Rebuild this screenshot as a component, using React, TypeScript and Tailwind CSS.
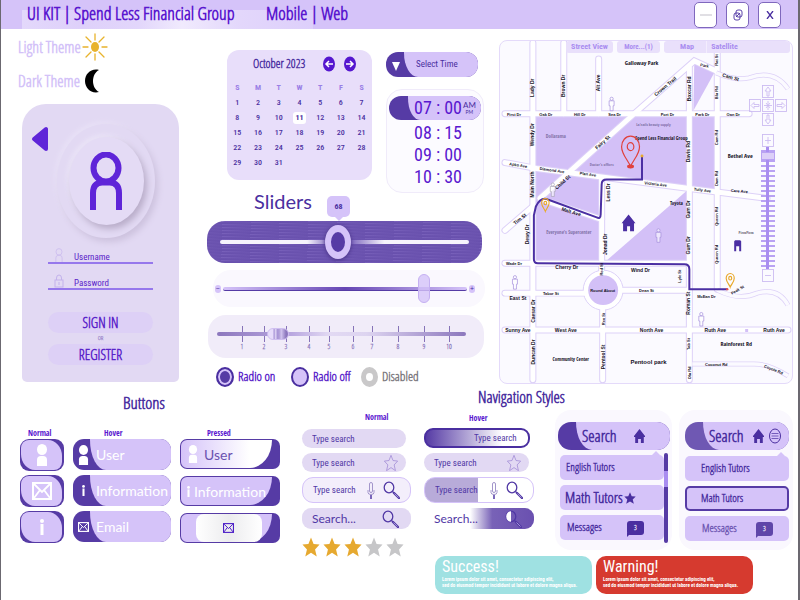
import type { ReactNode } from "react";

const NARROW = "font-['Open_Sans_Condensed_Light','Roboto_Condensed',sans-serif]";
const HEAVY = "font-['Open_Sans_Condensed','Roboto_Condensed',sans-serif]";
const MEDIUM = "font-['Roboto_Condensed','Open_Sans',sans-serif]";
const HUMAN = "font-['Lato','Open_Sans',sans-serif]";

/* ---------- icons ---------- */

function SunIcon() {
  return (
    <svg viewBox="0 0 26 28" className="h-7 w-[26px]" aria-hidden="true">
      <ellipse cx="13" cy="14" rx="4" ry="5" fill="#e8b32c" />
      <g stroke="#e8b32c" strokeWidth="1.3" strokeLinecap="round">
        <path d="M13 1v6M13 21v6M1 14h5M20 14h5M4 4l5 5M17 19l5 5M22 4l-5 5M9 19l-5 5" />
      </g>
    </svg>
  );
}

function MoonIcon() {
  return (
    <svg viewBox="0 0 16 24" className="h-6 w-4" aria-hidden="true">
      <path d="M15 1C7-1 1 5 1 12s6 13 14 11C7 19 7 5 15 1Z" fill="#000" />
    </svg>
  );
}

function PersonOutline({ className, width }: { className: string; width: number }) {
  return (
    <svg viewBox="0 0 34 58" className={className} fill="none" stroke="currentColor" strokeWidth={width} aria-hidden="true">
      <ellipse cx="17" cy="16" rx="12.5" ry="13.5" />
      <path d="M4 58V41q0-10 9-10.500h8q9 .5 9 10.500v17" />
    </svg>
  );
}

function LockIcon() {
  return (
    <svg viewBox="0 0 10 14" className="h-3.5 w-2.5" fill="none" stroke="#c3b2ec" strokeWidth="1" aria-hidden="true">
      <rect x="1" y="6" width="8" height="7" />
      <path d="M2.500 6V4a2.500 3 0 0 1 5 0v2M5 8v3" />
    </svg>
  );
}

function PersonSolid({ className }: { className: string }) {
  return (
    <svg viewBox="0 0 12 22" className={className} fill="#fff" aria-hidden="true">
      <ellipse cx="6" cy="5.500" rx="5" ry="5.500" />
      <path d="M1 22v-6q0-4 4-4h2q4 0 4 4v6Z" />
    </svg>
  );
}

function MailIcon({ className }: { className: string }) {
  return (
    <svg viewBox="0 0 20 18" className={className} fill="none" stroke="currentColor" strokeWidth="2" aria-hidden="true">
      <rect x="1" y="1" width="18" height="16" />
      <path d="M2 2l8 8 8-8M2 16l6-8M18 16l-6-8" strokeWidth="1.800" />
    </svg>
  );
}

function InfoIcon({ className }: { className: string }) {
  return (
    <svg viewBox="0 0 4 16" className={className} fill="#fff" aria-hidden="true">
      <circle cx="2" cy="2" r="2" />
      <path d="M.5 5h3v11h-3Z" />
    </svg>
  );
}

function SearchIcon({ filled = false }: { filled?: boolean }) {
  return (
    <svg viewBox="0 0 17 18" className="h-[18px] w-[17px] shrink-0" fill="none" stroke="#5138a5" aria-hidden="true">
      <ellipse cx="6" cy="6.500" rx="4.800" ry="5.300" strokeWidth="1.300" />
      {filled && <path d="M6 1.200a4.800 5.300 0 0 0 0 10.600Z" fill="#fff" stroke="none" />}
      <path d="M9.500 10.500l1.500 1.500" strokeWidth="1.300" />
      <path d="M11 12l5 5" strokeWidth="2.400" strokeLinecap="round" />
      <path d="M11.500 12.500l4 4" stroke="#c9bcea" strokeWidth=".7" />
    </svg>
  );
}

function MicIcon() {
  return (
    <svg viewBox="0 0 8 17" className="h-[17px] w-2 shrink-0" fill="none" stroke="#a396cb" strokeWidth="1" aria-hidden="true">
      <rect x="2.500" y=".5" width="3" height="10" rx="1.500" />
      <path d="M1 8v2.500q0 2 3 2t3-2V8" />
      <path d="M4 13v4" stroke="#5138a5" strokeWidth="1.500" />
    </svg>
  );
}

const STAR = "M8 .3l2.300 4.900 5.300.5-4 3.600 1.500 5.400L8 11.800l-5.100 2.900 1.500-5.400-4-3.600 5.300-.5Z";

function Star({ className, outline = false }: { className: string; outline?: boolean }) {
  return (
    <svg viewBox="0 0 16 15" preserveAspectRatio="none" className={className} aria-hidden="true">
      <path d={STAR} fill={outline ? "none" : "currentColor"} stroke={outline ? "currentColor" : "none"} strokeWidth=".8" />
    </svg>
  );
}

function HomeIcon() {
  return (
    <svg viewBox="0 0 11 14" className="h-3.5 w-[11px] shrink-0" fill="#4a2fa0" aria-hidden="true">
      <path d="M5.500 0L0 7v1h1.200v6h2.900v-4h2.800v4h2.900V8H11V7Z" />
    </svg>
  );
}

function ChatBadge({ className, tail }: { className: string; tail: string }) {
  return (
    <span className={`relative flex h-3.5 w-[17px] items-center justify-center rounded-[3px] text-[7px] leading-none font-bold text-white ${className}`}>
      3
      <svg viewBox="0 0 4 4" className="absolute -bottom-[2px] left-0 size-1" aria-hidden="true">
        <path d="M0 0h4L0 4Z" fill={tail} />
      </svg>
    </span>
  );
}

/* ---------- header ---------- */

function WindowButton({ label, children }: { label: string; children: ReactNode }) {
  return (
    <button aria-label={label} className="flex h-[26px] w-[23px] items-center justify-center rounded-[5px] border border-[#7f68bd] bg-white text-[#4a2fa0]">
      {children}
    </button>
  );
}

function Header() {
  return (
    <header className="flex h-[29px] items-center justify-between bg-[#d5c3f9] bg-[linear-gradient(90deg,#e3d8fb,#ded0fa_20%,#e2d6fb_40%,#f0eafd_55%,#e3d7fb_75%,#ddcffb)] bg-[length:291px_19px] bg-[position:21px_bottom] bg-no-repeat pr-[17px] pl-[26px]">
      <div className={`flex pb-1 text-[18px] leading-6 font-bold whitespace-nowrap text-[#5a17cf] ${NARROW}`}>
        <h1 className="w-[239px]">UI KIT | Spend Less Financial Group</h1>
        <p>Mobile | Web</p>
      </div>
      <div className="flex gap-[9px]">
        <WindowButton label="Minimize">
          <svg viewBox="0 0 12 2" className="h-0.5 w-3" aria-hidden="true"><path d="M0 1h12" stroke="#c2bfc9" /></svg>
        </WindowButton>
        <WindowButton label="Restore">
          <svg viewBox="0 0 10 12" className="h-3 w-2.5" fill="none" stroke="currentColor" strokeWidth=".9" aria-hidden="true">
            <rect x="3" y="1" width="6" height="7" rx="2" />
            <rect x="1" y="4" width="6" height="7" rx="2" />
            <path d="M3 8l4-4" />
          </svg>
        </WindowButton>
        <WindowButton label="Close">
          <svg viewBox="0 0 8 8" className="size-2" stroke="currentColor" strokeWidth="1.300" aria-hidden="true"><path d="M1 0l6 8M7 0L1 8" /></svg>
        </WindowButton>
      </div>
    </header>
  );
}

/* ---------- login ---------- */

function Field({ name, type, icon }: { name: string; type: string; icon: ReactNode }) {
  return (
    <label className="flex h-[17px] items-center gap-2.5 border-b-2 border-[#9678ec] pl-1.5">
      {icon}
      <input
        type={type}
        aria-label={name}
        placeholder={name}
        className={`w-full min-w-0 bg-transparent pt-1 text-[9px] leading-3 outline-none placeholder:text-[#5a24c9] placeholder:opacity-100 ${MEDIUM}`}
      />
    </label>
  );
}

function Login() {
  return (
    <section className="flex flex-col pl-[17px]">
      <div className={`flex flex-col gap-1 pt-1 text-[16px] font-bold text-[#d3c2f8] ${NARROW}`}>
        <button className="flex h-7 items-center gap-1"><span className="w-[60px] text-left whitespace-nowrap">Light Theme</span><SunIcon /></button>
        <button className="flex h-8 items-center gap-1"><span className="w-[62px] text-left whitespace-nowrap">Dark Theme</span><MoonIcon /></button>
      </div>
      <form className="mt-[7px] ml-1 flex h-[278px] flex-col rounded-t-3xl rounded-b-[5px] bg-[#e2d9f3] pt-5">
        <div className="flex items-start pl-[9px]">
          <button type="button" aria-label="Back" className="mt-0.5">
            <svg viewBox="0 0 18 26" className="h-[26px] w-[18px]" aria-hidden="true">
              <path d="M3 13L15 3v20Z" fill="#5f25d8" stroke="#5f25d8" strokeWidth="4" strokeLinejoin="round" />
            </svg>
          </button>
          <div className="ml-2 flex h-[114px] w-[98px] items-center justify-center rounded-[50%] shadow-[3px_4px_6px_#cdc2de,-2px_-2px_5px_#e9e2f7]">
            <div className="flex h-[88px] w-[75px] items-center justify-center rounded-[50%] bg-[#e4dbf5] shadow-[3px_4px_6px_#b9adc9,-2px_-2px_5px_#ece6f8]">
              <PersonOutline className="h-[58px] w-[34px] text-[#5f25d8]" width={6} />
            </div>
          </div>
        </div>
        <div className="mx-[26px] mt-[9px] flex flex-col gap-[9px]">
          <Field name="Username" type="text" icon={<PersonOutline className="h-3.5 w-2.5 shrink-0 text-[#c9b9ee]" width={3} />} />
          <Field name="Password" type="password" icon={<span className="shrink-0"><LockIcon /></span>} />
        </div>
        <div className={`mx-[26px] mt-[22px] flex flex-col text-[14px] font-bold text-[#5a24c9] ${NARROW}`}>
          <button type="submit" className="h-[21px] rounded-full bg-[#ddd0f6]">SIGN IN</button>
          <span className="h-[11px] text-center text-[6px] leading-[11px] text-[#8f7bc4]">OR</span>
          <button type="button" className="h-[21px] rounded-full bg-[#ddd0f6]">REGISTER</button>
        </div>
      </form>
    </section>
  );
}

/* ---------- calendar and time ---------- */

const WEEKS = [0, 7, 14, 21, 28].map((start) => Array.from({ length: 7 }, (_, i) => start + i + 1));

function ArrowButton({ label, flip = false }: { label: string; flip?: boolean }) {
  return (
    <button aria-label={label}>
      <svg viewBox="0 0 12 16" className="h-4 w-3" aria-hidden="true">
        <ellipse cx="6" cy="8" rx="6" ry="7.500" fill="#5517cf" />
        <path d={flip ? "M2 8h7M6 5l3 3-3 3" : "M10 8H3M6 5L3 8l3 3"} fill="none" stroke="#fff" strokeWidth="1.500" />
      </svg>
    </button>
  );
}

function Calendar() {
  return (
    <div className={`h-[130px] w-[145px] rounded-xl bg-[#e8defa] pt-1.5 ${NARROW}`}>
      <div className="flex items-center pr-4 pl-[26px]">
        <h2 className="flex-1 text-[12px] leading-4 font-bold whitespace-nowrap text-[#4a2fa0]">October 2023</h2>
        <div className="flex gap-[9px]"><ArrowButton label="Previous month" /><ArrowButton label="Next month" flip /></div>
      </div>
      <table className="mt-2 w-full table-fixed text-center text-[8px] text-[#4a2fa0]">
        <thead>
          <tr className="h-[15px] text-[#9a7fe6]">
            {["S", "M", "T", "W", "T", "F", "S"].map((d, i) => <th key={i} className={`p-0 font-bold ${MEDIUM}`}>{d}</th>)}
          </tr>
        </thead>
        <tbody className={MEDIUM}>
          {WEEKS.map((week) => (
            <tr key={week[0]} className="h-[15px]">
              {week.map((d) => (
                <td key={d} className="p-0 leading-3 font-medium">
                  {d <= 31 && <button className={d === 11 ? "h-3 w-[13px] rounded-[3px] bg-white font-bold" : "h-3"}>{d}</button>}
                </td>
              ))}
            </tr>
          ))}
        </tbody>
      </table>
    </div>
  );
}

function TimePicker() {
  return (
    <div className={`flex flex-col gap-3 pt-0.5 ${MEDIUM}`}>
      <div className="flex h-[25px] w-[92px] overflow-hidden rounded-xl bg-[#563ba5]">
        <svg viewBox="0 0 18 25" className="h-full w-[18px] shrink-0" aria-hidden="true"><path d="M6 10h8l-4 9Z" fill="#fff" /></svg>
        <select aria-label="Select Time" className="min-w-0 flex-1 appearance-none rounded-bl-[14px_24px] bg-[#d5c3f9] pl-3 text-[9px] text-[#4a2fa0] outline-none">
          <option>Select Time</option>
        </select>
      </div>
      <ul className="flex h-[104px] w-[98px] flex-col rounded-2xl border border-[#f0ebfa] bg-[#fcfbff] pt-1.5 text-[18px] leading-[22px] whitespace-nowrap text-[#5a17cf]">
        <li className="mx-0.5 mb-0.5 flex h-6 overflow-hidden rounded-xl bg-[#563ba5] pl-[19px]">
          <button className="flex flex-1 items-center gap-1 rounded-bl-[12px_22px] bg-[#d5c3f9] pl-[6px]">
            <span className="w-[45px] text-left">07 : 00</span>
            <span className={`flex flex-col text-[8px] leading-[9px] text-[#4a2fa0] ${HUMAN}`}>AM<small className="text-[5px] leading-[5px]">PM</small></span>
          </button>
        </li>
        {["08 : 15", "09 : 00", "10 : 30"].map((t) => <li key={t} className="pl-[27px]"><button>{t}</button></li>)}
      </ul>
    </div>
  );
}

/* ---------- sliders ---------- */

const RANGE = "block w-full appearance-none bg-transparent outline-none [&::-webkit-slider-thumb]:appearance-none";
const TICKS = [242, 264, 286, 309, 329, 353, 372, 398, 424, 449].map((x) => ((x - 217) / 249) * 100);

function Sliders() {
  return (
    <div className="flex flex-col">
      <div className="flex h-10 items-start pt-1.5 pl-[54px]">
        <h2 className={`text-[20px] leading-7 text-[#4a2fa0] ${HUMAN}`}>Sliders</h2>
      </div>
      <div className="relative ml-[7px] flex h-[42px] w-[275px] items-center rounded-[18px] bg-[#6d55b1] bg-[repeating-linear-gradient(2deg,#7860ba_0px,#6850ad_1px,#6d55b1_3px)] px-[13px]">
        <output className={`absolute -top-[25px] left-[120px] flex h-[21px] w-[23px] items-center justify-center rounded-[5px] bg-[#d5c3f9] text-[8px] font-bold text-[#4a2fa0] after:absolute after:top-full after:border-4 after:border-b-0 after:border-transparent after:border-t-[#d5c3f9] ${MEDIUM}`}>68</output>
        <input type="range" aria-label="Volume" min={0} max={144} defaultValue={68}
          className={`${RANGE} h-9 [&::-webkit-slider-runnable-track]:h-1 [&::-webkit-slider-runnable-track]:rounded-full [&::-webkit-slider-runnable-track]:bg-[linear-gradient(90deg,#f6f3fc_35%,#7a63bd_45%,#7a63bd_52%,#f6f3fc_66%)] [&::-webkit-slider-thumb]:-mt-[15px] [&::-webkit-slider-thumb]:h-[34px] [&::-webkit-slider-thumb]:w-[26px] [&::-webkit-slider-thumb]:rounded-[50%] [&::-webkit-slider-thumb]:border-[6px] [&::-webkit-slider-thumb]:border-y-[7px] [&::-webkit-slider-thumb]:border-[#d5c3f9] [&::-webkit-slider-thumb]:bg-[#563ba5] [&::-webkit-slider-thumb]:shadow-[0_1px_4px_#463184]`} />
      </div>
      <div className="mt-[7px] ml-[13px] flex h-[37px] w-[272px] items-center rounded-[18px] bg-[#faf8fe] pr-2.5 pl-0.5">
        <button aria-label="Decrease" className="flex h-2 w-1.5 shrink-0 items-center justify-center rounded-full bg-[#d5c3f9] text-[7px] leading-none text-[#4a2fa0]">−</button>
        <input type="range" aria-label="Brightness" defaultValue={84}
          className={`${RANGE} mx-0.5 h-8 min-w-0 flex-1 [&::-webkit-slider-runnable-track]:h-1 [&::-webkit-slider-runnable-track]:rounded-full [&::-webkit-slider-runnable-track]:border-b [&::-webkit-slider-runnable-track]:border-[#563ba5] [&::-webkit-slider-runnable-track]:bg-[linear-gradient(90deg,#d5c3f9,#6546b4_50%,#d5c3f9)] [&::-webkit-slider-thumb]:-mt-[13px] [&::-webkit-slider-thumb]:h-[29px] [&::-webkit-slider-thumb]:w-3 [&::-webkit-slider-thumb]:rounded-md [&::-webkit-slider-thumb]:border [&::-webkit-slider-thumb]:border-[#c5b0f2] [&::-webkit-slider-thumb]:bg-[#d5c3f9cc]`} />
        <button aria-label="Increase" className="flex h-2 w-1.5 shrink-0 items-center justify-center rounded-full bg-[#d5c3f9] text-[7px] leading-none text-[#4a2fa0]">+</button>
      </div>
      <div className="mt-2 ml-2 h-[43px] w-[276px] rounded-[18px] bg-[#f1ecf9] pt-[11px] pr-[18px] pl-[9px]">
        <div className="relative">
          {TICKS.map((left, i) => (
            <span key={left} style={{ left: `${left}%` }} className={`absolute flex w-4 -translate-x-1/2 flex-col items-center text-[7px] leading-[9px] font-bold text-[#8673b8] ${NARROW}`}>
              <i className="h-4 w-px bg-[#8673b8]" />{i + 1}
            </span>
          ))}
          <input type="range" aria-label="Scale" defaultValue={22}
            className={`${RANGE} relative h-4 [&::-webkit-slider-runnable-track]:h-1 [&::-webkit-slider-runnable-track]:rounded-full [&::-webkit-slider-runnable-track]:bg-[linear-gradient(90deg,#8c77bd,#b9a7e0_30%,#e2d9f3_45%,#ddd4f0_60%,#8c77bd)] [&::-webkit-slider-thumb]:-mt-1 [&::-webkit-slider-thumb]:h-3 [&::-webkit-slider-thumb]:w-[22px] [&::-webkit-slider-thumb]:rounded-md [&::-webkit-slider-thumb]:border [&::-webkit-slider-thumb]:border-[#cfbff0] [&::-webkit-slider-thumb]:bg-[linear-gradient(90deg,#e7dcfb_25%,#a793d6_30%,#ddd2f3_38%,#a793d6_48%,#b9a9dd_60%,#d3c5f0_66%,#8c77bd_90%)]`} />
        </div>
      </div>
      <fieldset className={`mt-[9px] flex h-5 items-center pl-[16px] text-[13px] font-bold whitespace-nowrap text-[#5a24c9] ${NARROW}`}>
        <label className="flex w-[75px] items-center gap-1">
          <input type="radio" name="demo" defaultChecked className="h-5 w-[18px] shrink-0 appearance-none rounded-[50%] border-2 border-[#4a2fa0] bg-[#563ba5] shadow-[inset_0_0_0_2px_#d5c3f9]" />Radio on
        </label>
        <label className="flex w-[70px] items-center gap-1">
          <input type="radio" name="demo" className="h-5 w-[18px] shrink-0 appearance-none rounded-[50%] border-2 border-[#4a2fa0] bg-[#d5c3f9]" />Radio off
        </label>
        <label className="flex items-center gap-1 text-[#7d7a80]">
          <input type="radio" name="demo" disabled className="h-5 w-[17px] shrink-0 appearance-none rounded-[50%] border-[5px] border-y-[6px] border-[#c9c8c9] bg-white" />Disabled
        </label>
      </fieldset>
    </div>
  );
}

/* ---------- map ---------- */

const ROADS = [
  "M533 42V380", "M564 42V113", "M599 58V113", "M602 178V272", "M603 304V380", "M690 66V380", "M718 52V289",
  "M505 113H750", "M505 162L537 168L690 188L768 198", "M505 263H690", "M505 293H585", "M621 290H690", "M505 330H789",
  "M540 198L638 110L695 60L717 70", "M505 230L533 206", "M545 200L602 219",
];
const LANES = ["M717 72Q735 80 750 77Q775 68 789 88", "M718 290Q740 301 758 293Q779 287 789 305", "M693 364H755Q770 364 789 376"];

type MapLabel = [x: number, y: number, text: string, size?: number, rotate?: number, color?: string];

const STREETS: MapLabel[] = [
  [534, 87, "Lady Dr", 5, -90], [565, 85, "Brown Dr", 5, -90], [600, 82, "Alt Ave", 5, -90], [534, 134, "Wendy Dr", 5, -90],
  [534, 184, "Main North", 5, -90], [529, 234, "Dewy Dr", 5, -90], [535, 311, "Caesar Dr", 5, -90], [535, 352, "Duncan Dr", 5, -90],
  [610, 192, "Less Dr", 5, -90], [607, 244, "Jonad Dr", 5, -90], [603, 269, "Red St", 4, -90], [605, 319, "Rex St", 4, -90],
  [605, 357, "Pentool St", 5, -90], [692, 88, "Boxcar Rd", 5, -90], [691, 151, "Davis Rd", 5, -90], [691, 209, "Gum Dr", 5, -90],
  [691, 245, "Gum Dr", 5, -90], [691, 303, "Roman St", 5, -90], [691, 344, "Tab St", 4, -90], [692, 373, "Ola Rd", 4, -90],
  [719, 59, "Rat St", 4, -90], [719, 92, "Blu Rd", 4, -90], [719, 137, "Cam Rd", 4, -90], [719, 178, "Dam Rd", 4, -90],
  [719, 216, "Queen Rd", 4, -90], [719, 254, "Queen Rd", 4, -90], [682, 276, "Lyle St", 4, -90],
  [514, 115, "First Dr", 4], [546, 115, "Oak Dr", 4], [580, 115, "Hill Dr", 4], [615, 115, "Sea Dr", 4], [668, 115, "Port Dr", 4],
  [703, 115, "Park Dr", 4], [734, 115, "Oan Dr", 4], [518, 166, "Apko Ave", 4, 9], [552, 171, "Diamond Ave", 4, 8], [588, 175, "Plan Ave", 4, 8],
  [656, 185, "Victoria Ave", 4, 7], [703, 191, "Tully Ave", 4, 6], [740, 192, "Care Ave", 4, 5], [604, 143, "Fairy St", 5, -42],
  [564, 183, "Child St", 5, -42], [667, 87, "Crown Trail", 5, -40], [705, 66, "Park", 4, 12], [731, 78, "Cam St", 5, 16],
  [521, 220, "Tim St", 5, -38], [571, 213, "Malt Ave", 5, 17], [514, 265, "Wade Dr", 4], [567, 269, "Cherry Dr", 5], [641, 272, "Wind Dr", 5],
  [518, 300, "East St", 5], [551, 295, "Tabor St", 4], [647, 292, "Dean St", 4], [707, 298, "McEan Dr", 4], [739, 291, "Peak St", 4, -30],
  [518, 332, "Sunny Ave", 5], [566, 332, "West Ave", 5], [652, 332, "North Ave", 5], [716, 332, "Ruth Ave", 5], [775, 332, "Ruth Ave", 5],
  [717, 366, "Coconut Rd", 4], [774, 371, "Coyote Rd", 4, 22], [603, 292, "Round About", 4], [649, 364, "Pentool park", 6],
];

const PLACES: MapLabel[] = [
  [642, 64, "Galloway Park", 6], [741, 157, "Bethel Ave", 6], [662, 139, "Spend Less Financial Group", 5],
  [677, 205, "Toyota", 5], [571, 361, "Community Center", 5], [737, 346, "Rainforest Rd", 6],
  [556, 137, "Dollarama", 5, 0, "#8271a8"], [654, 125, "La'nails beauty supply", 4, 0, "#8271a8"],
  [602, 165, "Doctor's offices", 4, 0, "#8271a8"], [569, 234, "Everyone's Supercenter", 5, 0, "#8271a8"],
  [747, 234, "PizzaPizza", 4, 0, "#6f6b78"],
];

function Label({ item, family }: { item: MapLabel; family: string }) {
  const [x, y, text, size = 5, rotate = 0, color = "#15111f"] = item;
  return (
    <text transform={`translate(${x} ${y}) rotate(${rotate})`} fontSize={size} textAnchor="middle" fontWeight="bold" fill={color} className={family}>
      {text}
    </text>
  );
}

function Walker({ x, y, color = "#a48fdc" }: { x: number; y: number; color?: string }) {
  return (
    <g transform={`translate(${x} ${y})`} fill="#fff" fillOpacity=".6" stroke={color} strokeWidth=".7">
      <circle cy="-5" r="1.600" />
      <path d="M-2.500-3h5v5h-1v5h-3V2h-1Z" />
    </g>
  );
}

function Pin({ x, y, s, w, color }: { x: number; y: number; s: number; w: number; color: string }) {
  return (
    <g transform={`translate(${x} ${y}) scale(${s})`} fill="none" stroke={color} strokeWidth={w}>
      <path d="M0 0C-2-6-9-12-9-20a9 10.500 0 0 1 18 0C9-12 2-6 0 0Z" />
      <ellipse cy="-20" rx="3.300" ry="4" />
    </g>
  );
}

function PadButton({ label, d, className = "" }: { label: string; d: string; className?: string }) {
  return (
    <button aria-label={label} className={className}>
      <svg viewBox="0 0 12 13" className="h-[13px] w-3" fill="none" stroke="#cdbcf2" strokeWidth=".9" aria-hidden="true">
        <rect x=".5" y=".5" width="11" height="12" /><path d={d} />
      </svg>
    </button>
  );
}

function MapControls() {
  return (
    <div className="absolute top-[44px] right-[5px] flex w-[38px] flex-col items-center">
      <div className="grid grid-cols-3 gap-px">
        <PadButton label="Pan up" className="col-start-2" d="M6 2l3 4H7v5H5V6H3Z" />
        <PadButton label="Pan left" className="col-start-1" d="M2 6.500l3-3v2h5v2H5v2Z" />
        <PadButton label="Centre map" d="M6 2v9M2 6.500h8M4 4l4 5M8 4L4 9" />
        <PadButton label="Pan right" d="M10 6.500l-3-3v2H2v2h5v2Z" />
        <PadButton label="Pan down" className="col-start-2" d="M6 11l3-4H7V2H5v5H3Z" />
      </div>
      <div className="mt-1 h-[13px]"><PadButton label="Zoom in" d="M6 3v7M3 6.500h6" /></div>
      <input type="range" aria-label="Zoom" defaultValue={96}
        className="mt-1 block h-[122px] w-3.5 appearance-none bg-[linear-gradient(90deg,transparent_5px,#a98df0_5px,#a98df0_8px,transparent_8px),repeating-linear-gradient(180deg,transparent_0px,transparent_3px,#b9a2f3_3px,#b9a2f3_5px)] outline-none [direction:rtl] [writing-mode:vertical-lr] [&::-webkit-slider-thumb]:h-2 [&::-webkit-slider-thumb]:w-3.5 [&::-webkit-slider-thumb]:appearance-none [&::-webkit-slider-thumb]:border [&::-webkit-slider-thumb]:border-[#b9a2f3] [&::-webkit-slider-thumb]:bg-[#dccff8]" />
      <PadButton label="Zoom out" d="M3 6.500h6" />
    </div>
  );
}

function CityMap() {
  return (
    <section className={`relative mt-[11px] mr-[5px] self-start overflow-hidden rounded-lg border border-[#e4dafa] bg-[#fbfaff] ${MEDIUM}`}>
      <svg viewBox="500 40 293 343" className="block h-auto w-full" role="img" aria-label="Street map">
        <g fill="#d3c0f7">
          <path d="M533 113H690V188L602 177V220L545 200L602 219V263H533Z" />
          <path d="M605 262L690 188V262Z" /><path d="M690 113H718V192L690 188Z" /><path d="M695 60L716 70L694 110Z" />
          <path d="M540 198L570 172L602 177V218Z" />
        </g>
        <g fill="none" stroke="#ddd1f8" strokeWidth="7">{ROADS.map((d) => <path key={d} d={d} strokeLinecap="round" />)}</g>
        <circle cx="603.500" cy="290" r="20" fill="#fff" stroke="#ddd1f8" />
        <g fill="none" stroke="#fff" strokeWidth="5">{ROADS.map((d) => <path key={d} d={d} strokeLinecap="round" />)}</g>
        <circle cx="603.500" cy="290" r="19" fill="#fff" />
        <circle cx="603.500" cy="290" r="15" fill="#d3c0f7" />
        <g fill="none" stroke="#ddd1f8" strokeWidth="5">{LANES.map((d) => <path key={d} d={d} />)}</g>
        <g fill="none" stroke="#fbfaff" strokeWidth="3.500">{LANES.map((d) => <path key={d} d={d} />)}</g>
        <path d="M642.500 155V179H607Q602 179 602 184L601 214Q601 219 597 217L548 199Q541 196 536 206L534 215V259Q534 263 538 263L685 264Q690 264 690 269V289H728" fill="none" stroke="#4b2fa3" strokeWidth="2" />
        <circle cx="642.500" cy="155.500" r="1.500" fill="#e8a92c" /><circle cx="728" cy="289" r="1.200" fill="#e0524f" />
        {STREETS.map((s, i) => <Label key={i} item={s} family="font-['Liberation_Sans',sans-serif]" />)}
        {PLACES.map((s, i) => <Label key={i} item={s} family={HEAVY} />)}
        <Walker x={612} y={103} /><Walker x={553} y={189} color="#aaa4b8" /><Walker x={515} y={282} /><Walker x={659} y={235} /><Walker x={702} y={319} />
        <Pin x={631} y={166} s={1} w={1.2} color="#e0413d" /><ellipse cx="631" cy="166" rx="3.500" ry="2" fill="#e0413d" />
        <Pin x={545.5} y={211} s={0.42} w={2.6} color="#e8a92c" /><Pin x={731} y={287} s={0.45} w={2.6} color="#e8a92c" />
        <path d="M629 214l-7 9h1.500v8h4v-5h3v5h4v-8h1.500Z" fill="#4b2fa3" />
        <path d="M735 241l1-1h5l1 1v10h-2v-5h-3v5h-2Z" fill="#4b2fa3" />
        <rect x="746" y="329" width="3" height="3" fill="#d3c0f7" />
      </svg>
      <div className="absolute inset-x-0 top-0 flex h-3 gap-[4px] pr-0.5 pl-[66px] text-[7px] leading-3 font-bold whitespace-nowrap text-[#a98df0]">
        <button className="w-[47px] rounded-[3px] bg-[#e9e0fb] text-[8px]">Street View</button>
        <button className="w-[43px] rounded-[3px] bg-[#e9e0fb]">More...(1)</button>
        <div className="flex flex-1 rounded-[3px] bg-[#e9e0fb] pl-3 text-[8px]">
          <button className="w-[22px]">Map</button><button className="ml-2 w-9 border-l border-[#f3edfd]">Satellite</button>
        </div>
      </div>
      <MapControls />
    </section>
  );
}

/* ---------- buttons ---------- */

const COLUMN_LABEL = `h-3 text-[8px] leading-3 font-bold text-[#5a17cf] ${HEAVY}`;

function NormalButton({ label, children }: { label: string; children: ReactNode }) {
  return (
    <button aria-label={label} className="flex h-8 w-11 rounded-[9px] bg-[#563ba5] py-px pr-0.5 pl-px">
      <span className="flex h-full w-full items-center justify-center rounded-[8px] rounded-tr-[14px_16px] rounded-bl-[14px_16px] bg-[#d5c3f9] text-white">{children}</span>
    </button>
  );
}

function HoverButton({ icon, children }: { icon: ReactNode; children: string }) {
  return (
    <button className="flex h-[31px] w-[98px] overflow-hidden rounded-[11px] bg-[#563ba5]">
      <span className="flex h-full w-[17px] shrink-0 items-center justify-center pl-1 text-white">{icon}</span>
      <span className="flex h-full flex-1 items-center rounded-bl-[16px_30px] bg-[#d5c3f9] pl-1.5 text-[14px] text-white">{children}</span>
    </button>
  );
}

function PressedButton({ className, label, children }: { className: string; label?: string; children: ReactNode }) {
  return (
    <button aria-label={label} className="flex h-[30px] w-[100px] rounded-[7px] bg-[#563ba5] py-px pr-2 pl-px">
      <span className={`flex h-full w-full items-center rounded-l-[6px] rounded-br-[22px_28px] text-[14px] ${className}`}>{children}</span>
    </button>
  );
}

function Buttons() {
  return (
    <section className="pl-[19px]">
      <h2 className={`h-10 pt-1 pl-[103px] text-[17px] leading-6 font-bold text-[#4a2fa0] ${NARROW}`}>Buttons</h2>
      <div className={`flex gap-[9px] ${HUMAN}`}>
        <div>
          <h3 className={`${COLUMN_LABEL} pl-2`}>Normal</h3>
          <div className="flex flex-col gap-1">
            <NormalButton label="User"><PersonSolid className="h-[22px] w-3" /></NormalButton>
            <NormalButton label="Email"><MailIcon className="h-[18px] w-5" /></NormalButton>
            <NormalButton label="Information"><InfoIcon className="h-4 w-1" /></NormalButton>
          </div>
        </div>
        <div>
          <h3 className={`${COLUMN_LABEL} pl-[31px]`}>Hover</h3>
          <div className="flex flex-col gap-[5px]">
            <HoverButton icon={<PersonSolid className="h-5 w-[11px]" />}>User</HoverButton>
            <HoverButton icon={<InfoIcon className="h-[11px] w-[3px]" />}>Information</HoverButton>
            <HoverButton icon={<MailIcon className="h-3 w-[11px]" />}>Email</HoverButton>
          </div>
        </div>
        <div>
          <h3 className={`${COLUMN_LABEL} pl-[27px]`}>Pressed</h3>
          <div className="flex flex-col gap-[7px]">
            <PressedButton className="gap-1.5 bg-[linear-gradient(90deg,#d5c3f9,#fff_75%)] pl-[7px] text-[#6a52b0]"><PersonSolid className="h-[18px] w-2.5" />User</PressedButton>
            <PressedButton className="gap-1 bg-[#d5c3f9] pl-1.5 text-white"><InfoIcon className="h-[11px] w-[3px]" />Information</PressedButton>
            <PressedButton label="Email" className="justify-center bg-[#d5c3f9] pl-1">
              <i className="flex h-full w-[66px] items-center justify-center rounded-lg bg-[linear-gradient(90deg,#fff,#ececee_50%,#fff)] text-[#4d1fc7]"><MailIcon className="h-3 w-[11px]" /></i>
            </PressedButton>
          </div>
        </div>
      </div>
    </section>
  );
}

/* ---------- search fields ---------- */

function SearchField({ className, hint = "Type search", inputClass = "", children }: { className: string; hint?: string; inputClass?: string; children?: ReactNode }) {
  return (
    <label className={`flex items-center overflow-hidden ${className}`}>
      <input type="text" aria-label={hint} placeholder={hint} className={`h-full min-w-0 flex-1 bg-transparent outline-none placeholder:text-[#5138a5] placeholder:opacity-100 ${inputClass}`} />
      {children}
    </label>
  );
}

function SearchNormal() {
  return (
    <section className={`flex w-[110px] flex-col pt-6 pl-px ${MEDIUM}`}>
      <h3 className={`${COLUMN_LABEL} mb-1.5 pl-[63px]`}>Normal</h3>
      <SearchField className="h-[19px] w-[104px] rounded-full bg-[#e2d9f3] text-[9px]" inputClass="pl-2.5" />
      <SearchField className="mt-[5px] h-[19px] w-[104px] rounded-full bg-[#e2d9f3] pr-2 text-[9px]" inputClass="pl-2.5"><Star outline className="h-4 w-3.5 shrink-0 text-[#a08bd6]" /></SearchField>
      <SearchField className="mt-[5px] h-[26px] w-[109px] gap-2 rounded-[11px] border border-[#d5c3f9] bg-[#f3eefb] pr-2.5 text-[9px]" inputClass="pl-2.5"><MicIcon /><SearchIcon /></SearchField>
      <SearchField className={`mt-[5px] h-[21px] w-[109px] rounded-[9px] bg-[#e2d9f3] pr-3 text-[12px] ${HUMAN}`} inputClass="pl-2.5" hint="Search..."><SearchIcon /></SearchField>
      <div className="mt-2 flex gap-[3px]" role="img" aria-label="Rated 3 out of 5">
        {[1, 2, 3, 4, 5].map((n) => <Star key={n} className={n <= 3 ? "h-5 w-[18px] text-[#e6a930]" : "h-5 w-[18px] text-[#c6c6c8]"} />)}
      </div>
    </section>
  );
}

function SearchHover() {
  return (
    <section className={`flex w-[110px] flex-col pt-0.5 ${MEDIUM}`}>
      <h3 className={`${COLUMN_LABEL} mb-1 pl-[45px]`}>Hover</h3>
      <SearchField className="h-5 w-[106px] rounded-[9px] border-2 border-[#4a2fa0] bg-[linear-gradient(90deg,#563ba5,#fff_75%)] text-[9px]" inputClass="pl-12" />
      <SearchField className="mt-[5px] h-[19px] w-[105px] rounded-full bg-[#e2d9f3] pr-2 text-[9px]" inputClass="pl-2.5"><Star outline className="h-4 w-3.5 shrink-0 text-[#a08bd6]" /></SearchField>
      <SearchField className="mt-[5px] h-[26px] w-[110px] gap-2 rounded-[11px] border border-[#d5c3f9] bg-[linear-gradient(90deg,#b8abd9_53px,#fff_53px)] pr-2.5 text-[9px]" inputClass="pl-2.5"><MicIcon /><SearchIcon /></SearchField>
      <SearchField className={`mt-[5px] h-[21px] w-[110px] rounded-[9px] bg-[linear-gradient(90deg,#fff_42%,#7862b7_62%,#6a50b0)] pr-3 text-[12px] ${HUMAN}`} inputClass="pl-2.5" hint="Search..."><SearchIcon filled /></SearchField>
    </section>
  );
}

/* ---------- menus ---------- */

const ITEM = "relative flex h-[25px] items-center rounded-[5px] bg-[#d5c3f9] whitespace-nowrap";
const POINTER = "before:absolute before:-top-1 before:right-1 before:border-4 before:border-t-0 before:border-transparent before:border-b-[#d5c3f9]";

function MenuHead({ dark, children }: { dark: string; children: ReactNode }) {
  return (
    <div className={`flex h-7 overflow-hidden rounded-[13px] ${dark}`}>
      <button className="ml-[18px] flex flex-1 items-center rounded-bl-[16px_28px] bg-[#d5c3f9] pl-1.5 text-[16px]">{children}</button>
    </div>
  );
}

function Menus() {
  return (
    <div className={`flex min-w-0 flex-1 gap-[7px] pr-[5px] font-bold text-[#4a2fa0] ${NARROW}`}>
      <nav className="h-[140px] w-[117px] rounded-2xl bg-[#faf8fe] pt-3 pr-0.5 pl-[3px]">
        <MenuHead dark="bg-[#563ba5]"><span className="w-[52px] text-left">Search</span><HomeIcon /></MenuHead>
        <div className="mt-[3px] ml-0.5 flex h-[90px] pr-0.5">
          <ul className="flex flex-1 flex-col gap-[5px] pt-0.5">
            <li className={`${ITEM} ${POINTER} pl-1.5 text-[11px]`}><a href="#english">English Tutors</a></li>
            <li className={`${ITEM} gap-px pl-[5px] text-[15px]`}><a href="#math">Math Tutors</a><Star className="size-3" /></li>
            <li className={`${ITEM} pl-[7px] text-[11px]`}><a href="#messages" className="w-[60px]">Messages</a><ChatBadge className="bg-[#4a2fa0]" tail="#4a2fa0" /></li>
          </ul>
          <div className="h-full w-1 rounded-full bg-[#563ba5] pt-[18px]"><div className="h-4 bg-[#a98df0]" /></div>
        </div>
      </nav>
      <nav className="h-[140px] flex-1 rounded-2xl bg-[#faf8fe] pt-3 pr-1 pl-1.5">
        <MenuHead dark="bg-[#6f58b3]">
          <span className="w-[44px] text-left">Search</span><HomeIcon />
          <svg viewBox="0 0 12 16" className="ml-[5px] h-4 w-3 shrink-0" fill="none" stroke="#4a2fa0" aria-hidden="true">
            <ellipse cx="6" cy="8" rx="5.500" ry="7" /><path d="M2.500 5.500h7M2.500 8h7M2.500 10.500h7" strokeWidth=".7" />
          </svg>
        </MenuHead>
        <ul className="mt-1.5 flex flex-col gap-[5px] text-[11px]">
          <li className={`${ITEM} ${POINTER} pl-4`}><a href="#english-2">English Tutors</a></li>
          <li className={`${ITEM} border-2 border-[#563ba5] pl-3.5`}><a href="#math-2">Math Tutors</a></li>
          <li className={`${ITEM} pl-[17px] text-[#6f58b3]`}><a href="#messages-2" className="w-[54px]">Messages</a><ChatBadge className="bg-[#5f46a9]" tail="#5f46a9" /></li>
        </ul>
      </nav>
    </div>
  );
}

function Alert({ title, className }: { title: string; className: string }) {
  return (
    <div role="alert" className={`h-[38px] w-[157px] rounded-[10px] pt-0.5 pl-[7px] text-white ${MEDIUM} ${className}`}>
      <h3 className="text-[16px] leading-[18px]">{title}</h3>
      <p className="text-[5px] leading-[6px] font-bold whitespace-nowrap">Lorem ipsum dolor sit amet, consectetur adipiscing elit,<br />sed do eiusmod tempor incididunt ut labore et dolore magna aliqua.</p>
    </div>
  );
}

export default function App() {
  return (
    <div className="min-h-screen overflow-hidden border-r-2 border-l border-[#6b6870] bg-white">
      <Header />
      <div className="grid grid-cols-[178px_1fr_299px]">
        <Login />
        <section className="pt-[21px] pl-[21px]">
          <div className="flex gap-3.5 pl-[27px]"><Calendar /><TimePicker /></div>
          <div className="-mt-[12px]"><Sliders /></div>
        </section>
        <CityMap />
      </div>
      <div className="grid grid-cols-[300px_123px_1fr]">
        <Buttons />
        <SearchNormal />
        <section className="min-w-0">
          <h2 className={`h-[23px] pl-[54px] text-[16px] leading-5 font-bold text-[#4a2fa0] ${NARROW}`}>Navigation Styles</h2>
          <div className="flex gap-[21px]"><SearchHover /><Menus /></div>
          <div className="mt-1.5 flex gap-1 pl-[11px]">
            <Alert title="Success!" className="bg-[#9fe1e2]" />
            <Alert title="Warning!" className="bg-[#d63a2f]" />
          </div>
        </section>
      </div>
    </div>
  );
}
